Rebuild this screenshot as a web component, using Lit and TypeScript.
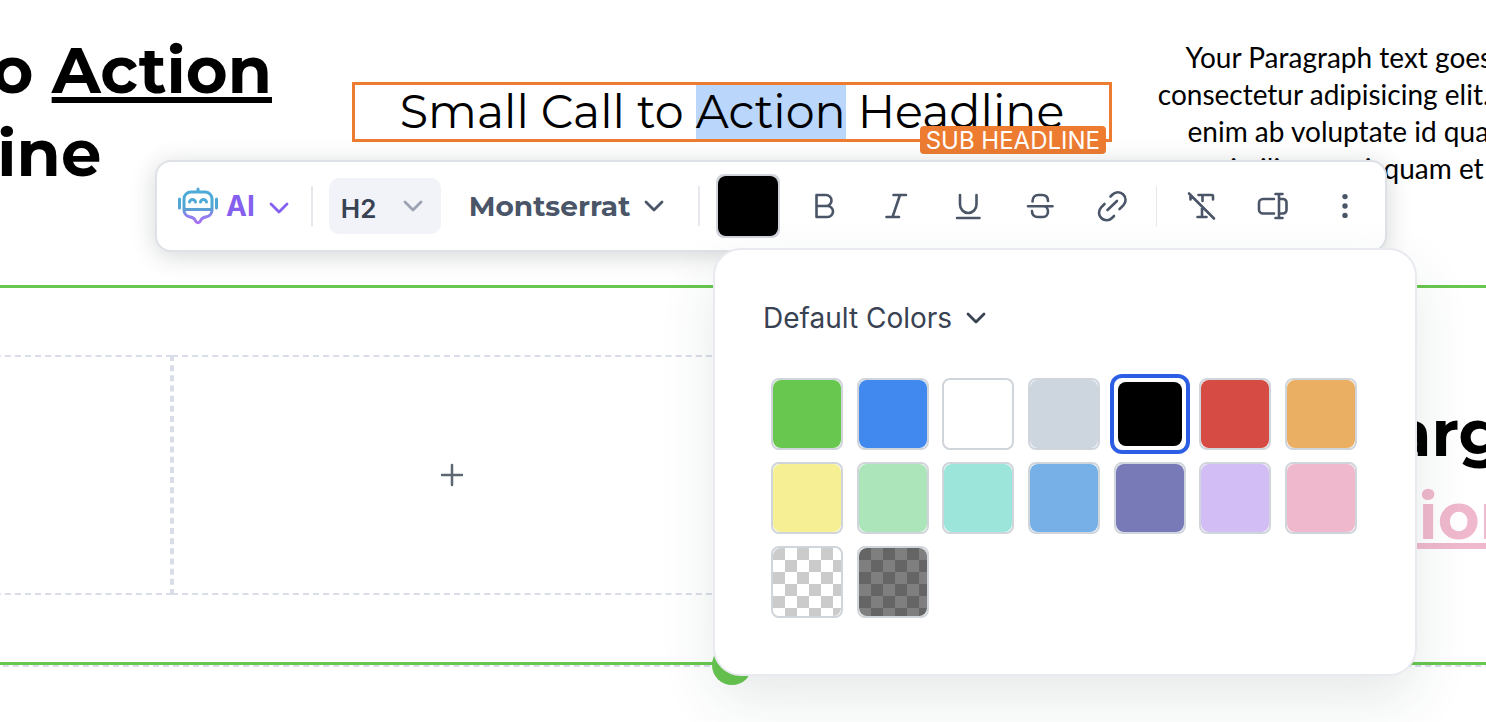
import { LitElement, html, css, svg } from "lit";
import { customElement, property, state } from "lit/decorators.js";
import { classMap } from "lit/directives/class-map.js";
import { styleMap } from "lit/directives/style-map.js";

const DISPLAY_FONT = css`Montserrat, Inter, "Open Sans", sans-serif`;

const chevron = html`<svg class="chevron" viewBox="0 0 20 12" width="20" height="12" fill="none" stroke="currentColor"
  stroke-width="2.8" stroke-linecap="round" stroke-linejoin="round" aria-hidden="true"><path d="M2 2l8 8 8-8" /></svg>`;

const ICONS: Record<string, unknown> = {
  bold: svg`<path d="M12.500 9h9.500a5.500 5.500 0 0 1 0 11H12.500zM12.500 20h11a5.500 5.500 0 0 1 0 11H12.500zM12.500 9v22"/>`,
  italic: svg`<path d="M17.500 9h12.500M10.500 31h12.500M24 9l-7.500 22"/>`,
  underline: svg`<path d="M12 9v9.500a8.250 8.500 0 0 0 16.500 0V9M9 32h22.500"/>`,
  strike: svg`<path d="M12.500 15.500c0-4 2-6.500 6-6.500h3.500c4 0 6 2.500 6 6M12 25c0 4 2.500 6 6 6h5c3 0 5-2.500 5-5.500S26 20.300 23.500 20.300M8 20.300h24.500"/>`,
  link: svg`<path d="M15.500 24l9.500-9M18.500 10.500l2-2a7.600 7.600 0 0 1 10.800 10.800l-3.800 3.800M12.500 18l-3.300 3.300A7.600 7.600 0 0 0 20 32l2-2"/>`,
  clear: svg`<path d="M8 7.500l25 25M17.500 9H31a1 1 0 0 1 1 1v3.500M21.500 9v6M9.500 10v3.500M21 22v9M16.500 31h9"/>`,
  rename: svg`<path d="M21 13H10a4 4 0 0 0-4 4v6.500a4 4 0 0 0 4 4H21M26 8v24M22.500 8h7M22.500 32h7M27 13h3a3.500 3.500 0 0 1 3.500 3.500V24a3.500 3.500 0 0 1-3.500 3.500H27"/>`,
  more: svg`<g fill="currentColor" stroke="none"><circle cx="20" cy="10.600" r="2.700"/><circle cx="20" cy="20" r="2.700"/><circle cx="20" cy="29.400" r="2.700"/></g>`,
};

@customElement("icon-button")
class IconButton extends LitElement {
  @property() icon = "bold";
  @property() label = "";

  static styles = css`
    :host { display: block; }
    .button {
      display: block;
      width: 40px;
      height: 40px;
      padding: 0;
      border: 0;
      border-radius: 8px;
      background: none;
      color: #4a5568;
      cursor: pointer;
    }
    .button:hover { background: #f2f3f8; }
    .glyph { display: block; }
  `;

  render() {
    return html`<button class="button" type="button" aria-label=${this.label}>
      <svg class="glyph" viewBox="0 0 40 40" width="40" height="40" fill="none" stroke="currentColor"
        stroke-width="2.6" stroke-linecap="round" stroke-linejoin="round">${ICONS[this.icon]}</svg>
    </button>`;
  }
}

@customElement("format-toolbar")
class FormatToolbar extends LitElement {
  @property() color = "#000000";

  static styles = css`
    :host { display: block; }
    .bar {
      display: flex;
      align-items: center;
      box-sizing: border-box;
      height: 92px;
      padding: 0 21px;
      border: 2px solid #dee1e6;
      border-radius: 16px;
      background: #fff;
      box-shadow: 0 4px 24px rgba(40, 50, 50, 0.2);
      font-family: Inter, sans-serif;
      color: #4a5568;
    }
    .ai {
      display: flex;
      align-items: center;
      gap: 8px;
      padding: 0;
      border: 0;
      background: none;
      color: #8560ee;
      font: 700 28px/40px Inter, sans-serif;
    }
    .ai .chevron { margin: 4px 0 0 6px; }
    .rule { width: 2px; height: 40px; flex: none; margin: 0 16px 0 22px; background: #e6e8ee; }
    .rule.wide { margin-left: 34px; }
    .rule.thin { width: 1px; margin: 0 24px; }
    .field { position: relative; display: flex; align-items: center; }
    .field .chevron { position: absolute; pointer-events: none; }
    .select {
      appearance: none;
      border: 0;
      margin: 0;
      background: none;
      color: inherit;
      outline: none;
    }
    .level {
      width: 112px;
      height: 56px;
      padding: 6px 12px 0;
      border-radius: 10px;
      background: #f2f3f8;
      color: #384253;
      font: 600 26px/40px Inter, sans-serif;
    }
    .level-field .chevron { right: 18px; color: #9ba3b3; }
    .family {
      width: 195px;
      height: 56px;
      padding: 0;
      font: 700 28px/40px ${DISPLAY_FONT};
    }
    .family-field { margin-left: 28px; }
    .family-field .chevron { right: 0; }
    .current {
      width: 64px;
      height: 64px;
      flex: none;
      padding: 0;
      border: 2px solid #d0d4da;
      border-radius: 8px;
      background: #d0d4da;
      overflow: hidden;
    }
    .current-fill { display: block; height: 60px; border-radius: 8px; }
    .tools { display: flex; gap: 32px; }
    .tools.text { margin-left: 24px; }
  `;

  render() {
    return html`<div class="bar" role="toolbar" aria-label="Text formatting">
      <button class="ai" type="button">
        <svg viewBox="0 0 40 38" width="40" height="38" fill="none" stroke="url(#bot)" stroke-width="3"
          stroke-linecap="round" stroke-linejoin="round" aria-hidden="true">
          <defs><linearGradient id="bot" gradientUnits="userSpaceOnUse" x1="0" y1="0" x2="0" y2="38">
            <stop offset="0.3" stop-color="#4eaad8" /><stop offset="0.55" stop-color="#52a5d0" />
            <stop offset="0.75" stop-color="#8c80ee" /><stop offset="1" stop-color="#b06cf5" />
          </linearGradient></defs>
          <path d="M20 2v3M13 5h14a7 7 0 0 1 7 7v11a7 7 0 0 1-5.500 6.800c-3 .5-4.500 1-5.500 3.200-.8 1.800-1.500 2.700-3 2.700s-2.200-.9-3-2.700c-1-2.200-2.500-2.700-5.500-3.200A7 7 0 0 1 6 23V12a7 7 0 0 1 7-7zM6 22.500h28M1.500 12v9M38.500 12v9M11.500 15c1-3.300 5-3.300 6 0M22.500 15c1-3.300 5-3.300 6 0" />
        </svg>
        <span>AI</span>${chevron}
      </button>
      <span class="rule"></span>
      <div class="field level-field">
        <select class="select level" aria-label="Heading level">
          <option>H1</option><option selected>H2</option><option>H3</option>
        </select>${chevron}
      </div>
      <div class="field family-field">
        <select class="select family" aria-label="Font family"><option>Montserrat</option><option>Lato</option></select>${chevron}
      </div>
      <span class="rule wide"></span>
      <button class="current" type="button" aria-label="Text color">
        <span class="current-fill" style=${styleMap({ background: this.color })}></span>
      </button>
      <div class="tools text">
        <icon-button icon="bold" label="Bold"></icon-button>
        <icon-button icon="italic" label="Italic"></icon-button>
        <icon-button icon="underline" label="Underline"></icon-button>
        <icon-button icon="strike" label="Strikethrough"></icon-button>
        <icon-button icon="link" label="Link"></icon-button>
      </div>
      <span class="rule thin"></span>
      <div class="tools">
        <icon-button icon="clear" label="Clear formatting"></icon-button>
        <icon-button icon="rename" label="Insert field"></icon-button>
        <icon-button icon="more" label="More"></icon-button>
      </div>
    </div>`;
  }
}

const CHECKER_LIGHT = "repeating-conic-gradient(#fff 0 25%, #cbcbcb 0 50%) 0 0 / 24px 24px";
const CHECKER_DARK = "repeating-conic-gradient(#7f7f7f 0 25%, #656565 0 50%) 0 0 / 24px 24px";

const SWATCHES = [
  { name: "Green", fill: "#68c74f" },
  { name: "Blue", fill: "#4189ef" },
  { name: "White", fill: "#ffffff" },
  { name: "Gray", fill: "#cdd5df" },
  { name: "Black", fill: "#000000" },
  { name: "Red", fill: "#d64c44" },
  { name: "Orange", fill: "#eaaf63" },
  { name: "Yellow", fill: "#f7ef93" },
  { name: "Mint", fill: "#abe5b9" },
  { name: "Aqua", fill: "#9ce5da" },
  { name: "Sky", fill: "#76b0e7" },
  { name: "Indigo", fill: "#777ab7" },
  { name: "Lilac", fill: "#d2bdf5" },
  { name: "Pink", fill: "#f0b8cd" },
  { name: "Transparent", fill: CHECKER_LIGHT },
  { name: "Translucent black", fill: CHECKER_DARK },
];

@customElement("color-popover")
class ColorPopover extends LitElement {
  @property() color = "#000000";

  static styles = css`
    :host { display: block; }
    .panel {
      box-sizing: border-box;
      padding: 48px 48px 56px;
      border: 2px solid #e8eaef;
      border-radius: 28px;
      background: #fff;
      box-shadow: 0 24px 56px rgba(40, 60, 60, 0.11);
    }
    .palette {
      display: flex;
      align-items: center;
      gap: 14px;
      padding: 0;
      border: 0;
      background: none;
      color: #384253;
      font: 400 28px/40px Inter, sans-serif;
    }
    .swatches {
      display: grid;
      grid-template-columns: repeat(7, 72px);
      justify-content: space-between;
      row-gap: 12px;
      margin-top: 40px;
      padding: 0 10px 0 8px;
    }
    .swatch {
      width: 72px;
      height: 72px;
      padding: 0;
      border: 2px solid #d0d5db;
      border-radius: 8px;
      background: #fff;
      cursor: pointer;
    }
    .fill { display: block; height: 68px; border-radius: 8px; }
    .selected { border: 4px solid #fff; box-shadow: 0 0 0 4px #2c5de5; }
    .selected .fill { height: 64px; }
  `;

  private pick(fill: string) {
    this.dispatchEvent(new CustomEvent("pick", { detail: fill }));
  }

  render() {
    return html`<div class="panel">
      <button class="palette" type="button">Default Colors ${chevron}</button>
      <div class="swatches">
        ${SWATCHES.map(
          (s) => html`<button type="button" aria-label=${s.name} aria-pressed=${s.fill === this.color ? "true" : "false"}
            class=${classMap({ swatch: true, selected: s.fill === this.color })} @click=${() => this.pick(s.fill)}>
            <span class="fill" style=${styleMap({ background: s.fill })}></span>
          </button>`
        )}
      </div>
    </div>`;
  }
}

@customElement("app-root")
class AppRoot extends LitElement {
  @state() private color = "#000000";

  static styles = css`
    :host {
      display: block;
      position: relative;
      min-height: 100vh;
      overflow: hidden;
      background: #fff;
      color: #000;
    }
    .canvas { width: calc(100% + 794px); margin-left: -408px; }
    .intro {
      display: grid;
      grid-template-columns: repeat(3, 1fr);
      column-gap: 20px;
      height: 256px;
      margin: 0 -20px;
      padding-top: 29px;
    }
    .headline {
      margin: 0;
      text-align: center;
      font: 700 64px/83px ${DISPLAY_FONT};
    }
    .line { display: block; }
    .sub {
      position: relative;
      align-self: start;
      box-sizing: border-box;
      margin-top: 53px;
      border: 3px solid #ed7c31;
    }
    .sub-headline {
      margin: 0;
      text-align: center;
      white-space: nowrap;
      font: 400 46px/54px ${DISPLAY_FONT};
    }
    .picked { display: inline-block; background: #bad6fb; color: inherit; }
    .tag {
      position: absolute;
      right: 3px;
      bottom: -15px;
      padding: 2px 6px 0;
      border-radius: 4px;
      background: #ed7c31;
      color: #fff;
      font: 400 24px/26px Inter, sans-serif;
    }
    .copy {
      margin: 10px 20px 0;
      text-align: center;
      font: 400 28px/37px Lato, sans-serif;
    }
    .section {
      position: relative;
      padding: 67px 20px;
      border-top: 3px solid #68c74f;
      border-bottom: 3px solid #68c74f;
    }
    .cells { display: grid; grid-template-columns: repeat(4, 1fr); }
    .cell {
      display: grid;
      place-items: center;
      box-sizing: border-box;
      height: 240px;
      border: 2px dashed #d9dde8;
    }
    .cell.filled { border-color: transparent; }
    .add { padding: 8px; border: 0; background: none; color: #5d6873; }
    .add-glyph { display: block; }
    .accent { color: #f0b8cd; }
    .handle {
      position: absolute;
      left: 50%;
      bottom: -23px;
      width: 40px;
      height: 40px;
      margin-left: -20px;
      padding: 0;
      border: 0;
      border-radius: 50%;
      background: #68c74f;
    }
    .next { border-top: 2px dashed #d9dde8; }
    .underlined { text-decoration: underline; text-decoration-thickness: 6px; text-underline-offset: 4px; text-decoration-skip-ink: none; }
    .toolbar { position: absolute; left: 155px; right: 99px; top: 160px; }
    .popover { position: absolute; left: 713px; top: 248px; width: 704px; }
  `;

  private addButton() {
    return html`<div class="cell"><button class="add" type="button" aria-label="Add element">
      <svg class="add-glyph" viewBox="0 0 24 24" width="24" height="24" fill="none" stroke="currentColor"
        stroke-width="2.500" stroke-linecap="round"><path d="M12 2v20M2 12h20" /></svg>
    </button></div>`;
  }

  render() {
    return html`
      <main class="canvas">
        <section class="intro">
          <h1 class="headline">
            <span class="line">Large Call to <span class="underlined">Action</span>&nbsp;</span>
            <span class="line">Headline</span>
          </h1>
          <div class="sub">
            <h2 class="sub-headline">Small Call to <mark class="picked">Action</mark> Headline</h2>
            <span class="tag">SUB HEADLINE</span>
          </div>
          <p class="copy">
            Your Paragraph text goes Lorem ipsum dolor sit amet, consectetur adipisicing elit. Autem dolore, alias,
            numquam enim ab voluptate id quam harum ducimus cupiditate similique quisquam et deserunt, recusandae aut.
          </p>
        </section>
        <section class="section">
          <div class="cells">
            ${this.addButton()} ${this.addButton()} ${this.addButton()}
            <div class="cell filled">
              <h2 class="headline">
                <span class="line">Large Call to&nbsp;</span>
                <span class="line"><span class="underlined accent">Action</span> Headline</span>
              </h2>
            </div>
          </div>
          <button class="handle" type="button" aria-label="Add section"></button>
        </section>
        <div class="next"></div>
      </main>
      <format-toolbar class="toolbar" .color=${this.color}></format-toolbar>
      <color-popover class="popover" .color=${this.color}
        @pick=${(e: CustomEvent<string>) => (this.color = e.detail)}></color-popover>
    `;
  }
}
